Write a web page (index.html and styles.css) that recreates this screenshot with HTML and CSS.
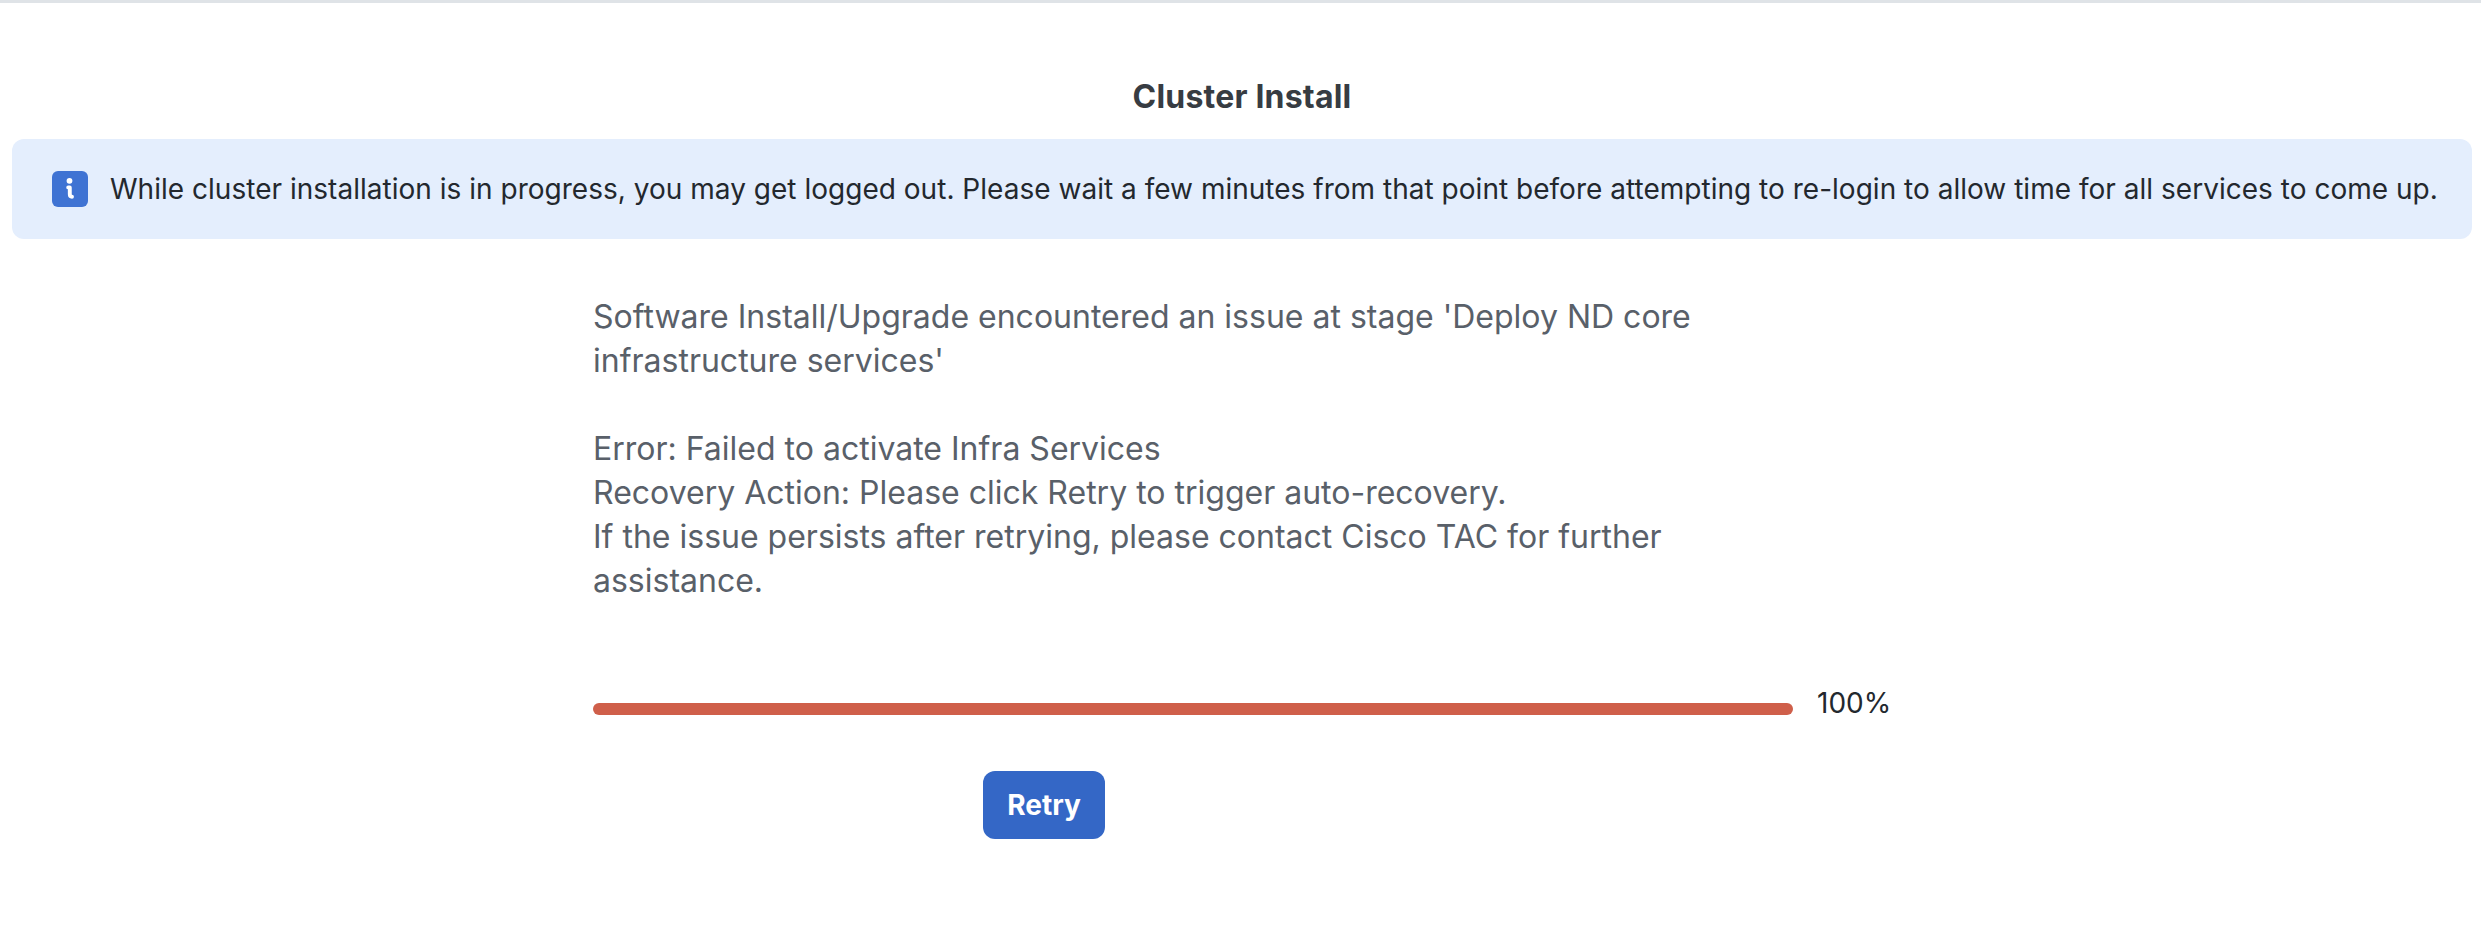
FILE: index.html
```html
<!DOCTYPE html>
<html lang="en">
  <head>
    <meta charset="UTF-8" />
    <meta name="viewport" content="width=device-width, initial-scale=1.0" />
    <title>Cluster Install</title>
    <link rel="stylesheet" href="styles.css">
  </head>
  <body>
    <main class="install-page">
      <h1 class="title">Cluster Install</h1>

      <div class="alert">
        <svg class="alert-icon" viewBox="0 0 36 36" aria-hidden="true">
          <rect width="36" height="36" rx="6" fill="#3f73d3" />
          <circle cx="17.5" cy="9.8" r="2.9" fill="#fff" />
          <path d="M16.2 16.4H17.8V23.3Q17.8 25.7 20 25.7" fill="none" stroke="#fff" stroke-width="3.9" stroke-linecap="round" stroke-linejoin="round" />
        </svg>
        <span class="alert-text">While cluster installation is in progress, you may get logged out. Please wait a few minutes from that point before attempting to re-login to allow time for all services to come up.</span>
      </div>

      <section class="status">
        <p class="message">Software Install/Upgrade encountered an issue at stage 'Deploy ND core infrastructure services'</p>
        <p class="message">
          <span>Error: Failed to activate Infra Services</span><br />
          <span>Recovery Action: Please click Retry to trigger auto-recovery.</span><br />
          <span>If the issue persists after retrying, please contact Cisco TAC for further assistance.</span>
        </p>
        <div class="progress">
          <div class="progress-track">
            <div class="progress-bar" style="width: 100%"></div>
          </div>
          <span class="progress-value">100%</span>
        </div>
        <button type="button" class="retry-btn">Retry</button>
      </section>
    </main>
  </body>
</html>
```
FILE: styles.css
```css
* {
  box-sizing: border-box;
}
body {
  margin: 0;
  min-height: 100vh;
  background-color: #fff;
  border-top: 3px solid #dfe3e7;
  color: #23282e;
  font-family: Inter, "Liberation Sans", sans-serif;
  font-size: 28px;
}
.install-page {
  padding: 72px 9px 0 12px;
}
.title {
  margin: 0 0 20px;
  color: #373c42;
  font-size: 32px;
  font-weight: 700;
  line-height: 44px;
  letter-spacing: 0.2px;
  text-align: center;
}
.alert {
  display: flex;
  align-items: center;
  gap: 22px;
  height: 100px;
  padding: 0 34px 0 40px;
  border-radius: 12px;
  background-color: #e4eefd;
}
.alert-icon {
  flex: none;
  width: 36px;
  height: 36px;
}
.alert-text {
  white-space: nowrap;
  letter-spacing: 0.02px;
}
.status {
  width: 1300px;
  margin: 56px 0 0 581px;
}
.message {
  width: 1200px;
  margin: 0 0 44px;
  color: #596069;
  font-size: 32px;
  line-height: 44px;
}
.progress {
  display: flex;
  align-items: center;
  gap: 24px;
  margin-top: 81px;
  height: 40px;
}
.progress-track {
  width: 1200px;
  margin-top: 10px;
}
.progress-bar {
  height: 12px;
  border-radius: 6px;
  background-color: #cf5f4a;
}
.progress-value {
  margin-top: -2px;
}
.retry-btn {
  display: block;
  width: 122px;
  height: 68px;
  margin: 47px 0 0 390px;
  padding: 0;
  border: none;
  border-radius: 12px;
  background-color: #3467c6;
  color: #fff;
  font-family: inherit;
  font-size: 28px;
  font-weight: 700;
  cursor: pointer;
}
```
